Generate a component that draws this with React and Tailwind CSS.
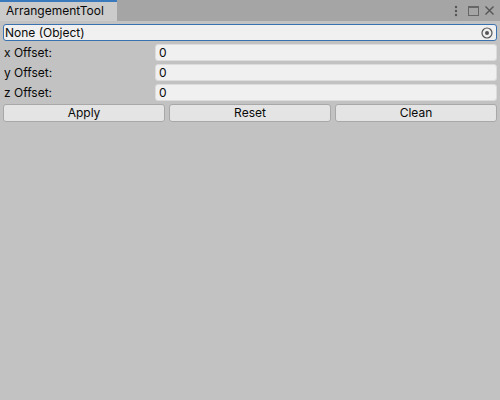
export default function App() {
  const rows = ["x Offset:", "y Offset:", "z Offset:"];
  return (
    <div
      className="w-[500px] h-[400px] bg-[#c2c2c2] text-[12px] text-[#090909] flex flex-col"
      style={{ fontFamily: "Inter, 'Liberation Sans', sans-serif" }}
    >
      {/* tab bar */}
      <div className="h-[21px] bg-[#a5a5a5] flex items-end justify-between">
        <div className="w-[117px] h-[21px] bg-[#cbcbcb] border-t-2 border-[#3a79bb] pl-[6px] leading-[18px]">
          ArrangementTool
        </div>
        <div className="flex items-center pr-[6px] h-[21px]">
          <svg width="4" height="12" viewBox="0 0 4 12">
            <circle cx="2" cy="2" r="1.2" fill="#555" />
            <circle cx="2" cy="6" r="1.2" fill="#555" />
            <circle cx="2" cy="10" r="1.2" fill="#555" />
          </svg>
          <svg width="11" height="10" viewBox="0 0 11 10" className="ml-[10px]">
            <rect x="0.5" y="0.5" width="10" height="9" fill="none" stroke="#666" />
            <line x1="0" y1="1.5" x2="11" y2="1.5" stroke="#666" strokeWidth="1" />
          </svg>
          <svg width="9" height="9" viewBox="0 0 9 9" className="ml-[6px]">
            <path d="M0.5 0.5 L8.5 8.5 M8.5 0.5 L0.5 8.5" stroke="#555" strokeWidth="1.4" />
          </svg>
        </div>
      </div>

      <div className="px-[3px] pt-[3px] flex flex-col">
        {/* object field */}
        <div className="h-[17px] bg-[#f0f0f0] border border-[#3a72b0] rounded-[3px] flex items-center justify-between pl-[1px] pr-[3px]">
          <span className="leading-none">None (Object)</span>
          <svg width="12" height="12" viewBox="0 0 12 12">
            <circle cx="6" cy="6" r="5" fill="none" stroke="#555" strokeWidth="1.2" />
            <circle cx="6" cy="6" r="2" fill="#555" />
          </svg>
        </div>

        {rows.map((label) => (
          <div key={label} className="flex items-center h-[17px] mt-[3px]">
            <span className="w-[152px] pl-[1px]">{label}</span>
            <div className="flex-1 h-[17px] bg-[#f0f0f0] border border-[#dcdcdc] rounded-[3px] pl-[3px] flex items-center">
              0
            </div>
          </div>
        ))}

        <div className="flex gap-[4px] mt-[3px]">
          {["Apply", "Reset", "Clean"].map((b) => (
            <button
              key={b}
              className="flex-1 h-[18px] bg-[#e4e4e4] border border-[#a8a8a8] rounded-[3px] flex items-center justify-center"
            >
              {b}
            </button>
          ))}
        </div>
      </div>
    </div>
  );
}
